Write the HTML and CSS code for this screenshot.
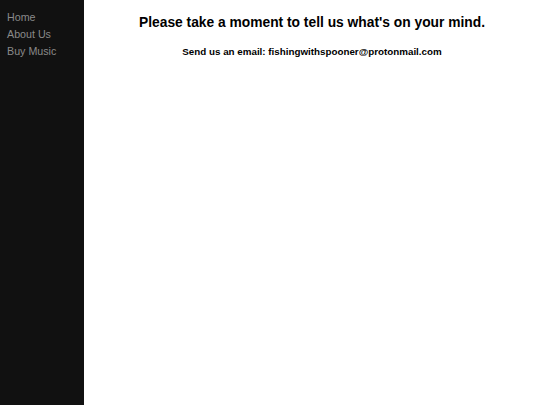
FILE: index.html
```html
<!DOCTYPE html>
<html>
<head>
<meta charset="utf-8">
<link rel="stylesheet" href="styles.css">
</head>
<body>
<nav class="sidenav">
  <a href="#">Home</a>
  <a href="#">About Us</a>
  <a href="#">Buy Music</a>
</nav>
<main class="main">
  <h1 class="title">Please take a moment to tell us what's on your mind.</h1>
  <p class="email">Send us an email: fishingwithspooner@protonmail.com</p>
</main>
</body>
</html>
```
FILE: styles.css
```css
html, body {
  margin: 0;
  height: 100%;
}
body {
  display: flex;
  font-family: "Liberation Sans", Arial, sans-serif;
  background: #fff;
}
.sidenav {
  width: 84px;
  flex: 0 0 84px;
  background: #111;
  display: flex;
  flex-direction: column;
  padding-top: 9px;
  box-sizing: border-box;
}
.sidenav a {
  color: #8a8a8a;
  text-decoration: none;
  font-size: 10.7px;
  line-height: 17px;
  padding-left: 7px;
}
.main {
  flex: 1;
  text-align: center;
  padding-top: 14px;
}
.title {
  font-size: 13.8px;
  margin: 0;
  line-height: 18px;
}
.email {
  font-size: 9.8px;
  font-weight: bold;
  margin: 14px 0 0;
}
```
